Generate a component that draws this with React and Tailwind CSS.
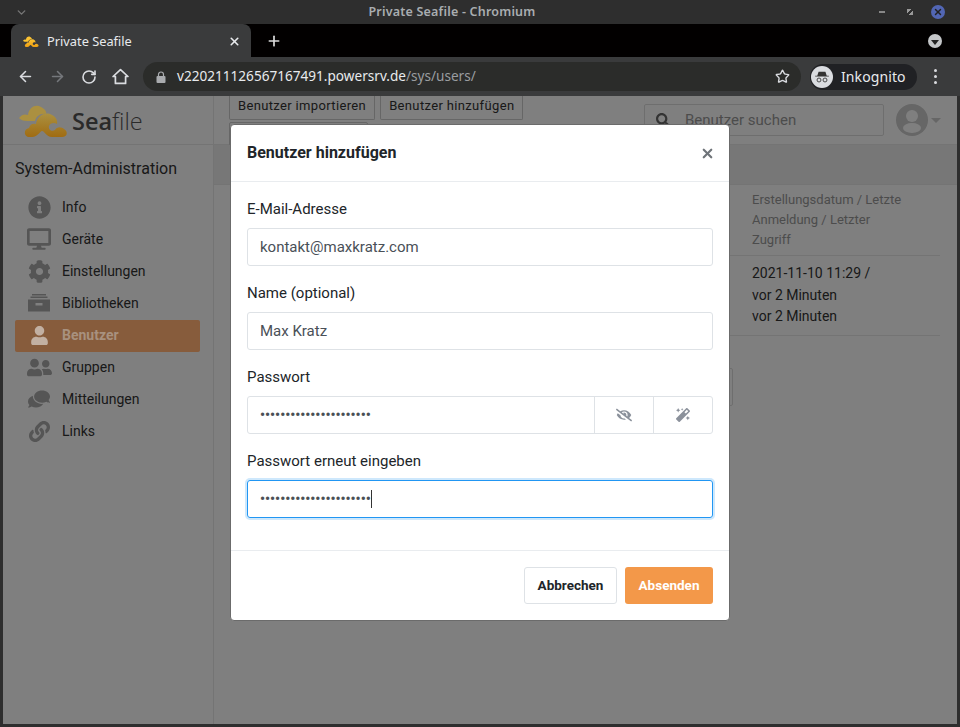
import React from 'react';
import { ArrowLeft, ArrowRight, RotateCw, Star, X, Plus, ChevronDown } from 'lucide-react';
import { FaInfoCircle, FaDesktop, FaCog, FaUser, FaUserFriends, FaComments, FaLink, FaSearch, FaEyeSlash, FaMagic } from 'react-icons/fa';

const LogoMark = ({ className, id, top, bottom }) => (
  <svg viewBox="0 0 49 33" preserveAspectRatio="none" className={className}>
    <defs>
      <linearGradient id={id} x1="0" y1="0" x2="0" y2="1">
        <stop offset="0" stopColor={top} />
        <stop offset="1" stopColor={bottom} />
      </linearGradient>
    </defs>
    <path
      d="M0 14 C3 10 6 10 9 11 C10 3 17 0 22 3 C26 5 28 8 27 10 C22 9 17 12 16 17 L8 17 C4 17 2 16 0 14Z"
      fill={top}
    />
    <path
      d="M10 33 C5 33 4 25 10 24 C11 20 14 19 17 20 C18 13 24 8 31 10 C37 12 39 17 38 20 C35 18 31 19 30 22 C29 26 33 28 36 26 C38 22 43 23 45 25 C49 27 49 33 43 33 L33 33 C27 33 26 27 23 27 C21 27 19 33 13 33Z"
      fill={`url(#${id})`}
    />
  </svg>
);

const ArchiveIcon = () => (
  <svg viewBox="0 0 22 18" className="h-[18px] w-[22px] fill-[#aaaaaa]">
    <rect x="4" y="0" width="14" height="1.5" />
    <rect x="2.5" y="2.5" width="17" height="1.5" />
    <path d="M0 5.5h22v12H0z M7.5 9v2.5h7V9z" fillRule="evenodd" />
  </svg>
);

const navItems = [
  { label: 'Info', icon: <FaInfoCircle size={23} /> },
  { label: 'Geräte', icon: <FaDesktop size={24} /> },
  { label: 'Einstellungen', icon: <FaCog size={23} /> },
  { label: 'Bibliotheken', icon: <ArchiveIcon /> },
  { label: 'Benutzer', icon: <FaUser size={19} />, active: true },
  { label: 'Gruppen', icon: <FaUserFriends size={25} /> },
  { label: 'Mitteilungen', icon: <FaComments size={22} className="-scale-x-100" /> },
  { label: 'Links', icon: <FaLink size={21} /> },
];

const Field = ({ label, children }) => (
  <div className="mb-4">
    <label className="mb-2 block h-[22px] text-[15px] leading-[22px] text-[#212529]">{label}</label>
    {children}
  </div>
);

const inputClass = 'flex h-[38px] items-center rounded-[3px] border border-[#dee2e6] px-3 text-[15px] text-[#495057]';

const Dots = () => (
  <span className="text-[14px] font-bold text-[#4a4f55]">{'•'.repeat(22)}</span>
);

const Modal = () => (
  <div className="absolute left-[230px] top-[124px] z-20 w-[500px] rounded-[4px] border border-[#6b6b6b] bg-white font-['Roboto',sans-serif]">
    <div className="flex h-[57px] items-center justify-between border-b border-[#e9ecef] pl-4 pr-[14px]">
      <h5 className="text-base font-bold text-[#212529]">Benutzer hinzufügen</h5>
      <X size={15} strokeWidth={3.5} className="text-[#6f7479]" />
    </div>
    <div className="p-4">
      <Field label="E-Mail-Adresse">
        <div className={inputClass}>kontakt@maxkratz.com</div>
      </Field>
      <Field label="Name (optional)">
        <div className={inputClass}>Max Kratz</div>
      </Field>
      <Field label="Passwort">
        <div className="flex h-[38px] rounded-[3px] border border-[#dee2e6]">
          <div className="flex flex-1 items-center px-3"><Dots /></div>
          <div className="flex w-[59px] items-center justify-center border-l border-[#dee2e6] text-[#8b919b]">
            <FaEyeSlash size={16} />
          </div>
          <div className="flex w-[59px] items-center justify-center border-l border-[#dee2e6] text-[#8b919b]">
            <FaMagic size={14} />
          </div>
        </div>
      </Field>
      <Field label="Passwort erneut eingeben">
        <div className="flex h-[38px] items-center rounded-[3px] border border-[#2196f3] px-3 shadow-[0_0_0_2px_rgba(33,150,243,0.22)]">
          <Dots />
          <span className="h-[18px] w-px bg-[#333]" />
        </div>
      </Field>
    </div>
    <div className="flex justify-end gap-2 border-t border-[#e9ecef] p-4">
      <button className="h-[37px] w-[93px] rounded-[3px] border border-[#dee2e6] bg-white text-[13.5px] font-bold text-[#212529]">Abbrechen</button>
      <button className="h-[37px] w-[88px] rounded-[3px] bg-[#f39849] text-[13.5px] font-bold text-white">Absenden</button>
    </div>
  </div>
);

const Page = () => (
  <div className="relative flex min-h-0 flex-1 overflow-hidden bg-white font-['Roboto',sans-serif]">
    <aside className="flex w-[211px] shrink-0 flex-col border-r border-[#e8e8e8]">
      <div className="flex h-[49px] shrink-0 items-center border-b border-[#e8e8e8] pl-[16px]">
        <LogoMark className="relative z-10 h-[33px] w-[49px]" id="seafile-page" top="#ab9040" bottom="#a06c12" />
        <span className="ml-[4px] mt-[3px] font-['Open_Sans',sans-serif] text-[23.5px] leading-none text-[#555]">
          <span className="font-semibold">Sea</span><span className="font-light">file</span>
        </span>
      </div>
      <h3 className="mt-[12px] pl-3 text-base leading-[24px] text-[#333]">System-Administration</h3>
      <ul className="ml-3 mt-[11px] flex w-[185px] flex-col">
        {navItems.map((item) => (
          <li
            key={item.label}
            className={`flex h-[32px] items-center rounded-[2px] pb-[2px] text-sm ${item.active ? 'relative z-10 bg-[#875c3c] font-bold text-[#a8917f]' : 'text-[#333]'}`}
          >
            <span className={`flex w-[47px] justify-center pl-px ${item.active ? 'text-[#c2b0a2]' : 'text-[#aaaaaa]'}`}>{item.icon}</span>
            {item.label}
          </li>
        ))}
      </ul>
    </aside>
    <main className="flex min-w-0 flex-1 flex-col">
      <div className="flex h-[49px] shrink-0 justify-between border-b border-[#e8e8e8]">
        <div className="flex w-[320px] flex-wrap content-start gap-x-[5px] gap-y-[2px] pl-[15px]">
          <button className="h-[24px] rounded-b-[2px] border border-t-0 border-[#ccc] px-2 pb-[5px] text-[13px] tracking-[0.35px] text-[#333]">Benutzer importieren</button>
          <button className="h-[24px] rounded-b-[2px] border border-t-0 border-[#ccc] px-2 pb-[5px] text-[13px] tracking-[0.35px] text-[#333]">Benutzer hinzufügen</button>
          <button className="h-[24px] w-[139px] rounded-[2px] border border-[#ccc]" />
        </div>
        <div className="flex items-center pr-[16px]">
          <div className="flex h-[32px] w-[240px] items-center rounded-[2px] border border-[#ddd] pl-[11px] text-[15px] text-[#999]">
            <FaSearch size={14} className="mr-[15px] text-[#666]" />
            Benutzer suchen
          </div>
          <svg viewBox="0 0 32 32" className="ml-[12px] h-[32px] w-[32px]">
            <circle cx="16" cy="16" r="16" fill="#ccc" />
            <circle cx="16" cy="12" r="6" fill="#fff" />
            <ellipse cx="16" cy="24" rx="9" ry="5" fill="#fff" />
          </svg>
          <span className="ml-[3px] h-0 w-0 border-x-[5px] border-t-[5px] border-x-transparent border-t-[#ccc]" />
        </div>
      </div>
      <div className="h-[40px] shrink-0 border-b border-[#e8e8e8] bg-[#eeeeee]" />
      <div className="ml-auto mr-[17px] w-[211px] text-[13px]">
        <div className="h-[71px] border-b border-[#e8e8e8] pl-[23px] pr-[33px] pt-[5px] leading-[20px] text-[#999]">
          Erstellungsdatum / Letzte Anmeldung / Letzter Zugriff
        </div>
        <div className="h-[80px] border-b border-[#e8e8e8] pl-[23px] pt-[7px] text-sm leading-[21.5px] text-[#333]">
          2021-11-10 11:29 /<br />vor 2 Minuten<br />vor 2 Minuten
        </div>
      </div>
      <div className="ml-[400px] mt-[32px] h-[38px] w-[119px] rounded-[2px] border border-[#ddd]" />
    </main>
    <div className="absolute inset-0 bg-black/50" />
  </div>
);

const BrowserChrome = () => (
  <div className="shrink-0 font-['Noto_Sans',sans-serif]">
    <div className="relative flex h-[24px] items-center justify-center bg-[#2e2e2e] pr-[56px] text-[12.5px] font-semibold tracking-[0.2px] text-[#a9adb0]">
      <ChevronDown size={13} strokeWidth={2.5} className="absolute left-[15px] text-[#777]" />
      Private Seafile - Chromium
      <div className="absolute right-[15px] flex items-center">
        <span className="h-[2px] w-[6px] bg-[#888]" />
        <span className="ml-[22px] h-[6px] w-[6px] bg-[linear-gradient(135deg,#999_40%,transparent_40%,transparent_60%,#999_60%)]" />
        <span className="ml-[18px] flex h-[14px] w-[14px] items-center justify-center rounded-full bg-[#5266b4]">
          <X size={10} strokeWidth={3.5} className="text-[#222]" />
        </span>
      </div>
    </div>
    <div className="flex h-[33px] items-end bg-[#020000] pl-[11px] pr-[18px]">
      <div className="flex h-[33px] w-[240px] items-center rounded-t-[8px] bg-[#3a3b3c] pl-[12px] pr-[10px] pt-[2px]">
        <LogoMark className="h-[11px] w-[16px]" id="seafile-tab" top="#fcc332" bottom="#ee9f12" />
        <span className="ml-[8px] flex-1 text-[12.8px] text-[#e8eaed]">Private Seafile</span>
        <X size={13} strokeWidth={3} className="text-[#e8eaed]" />
      </div>
      <Plus size={16} strokeWidth={2.5} className="mb-[8px] ml-[15px] text-[#ddd]" />
      <span className="mb-[9px] ml-auto flex h-[14px] w-[14px] items-center justify-center rounded-full bg-[#c4c6c8]">
        <span className="mt-[2px] h-0 w-0 border-x-[4px] border-t-[5px] border-x-transparent border-t-[#222]" />
      </span>
    </div>
    <div className="flex h-[39px] items-center bg-[#3a3b3c] pl-[17px] pr-[17px]">
      <ArrowLeft size={17} strokeWidth={2.2} className="text-[#dadce0]" />
      <ArrowRight size={17} strokeWidth={2.2} className="ml-[15px] text-[#75787c]" />
      <RotateCw size={16} strokeWidth={2.4} className="ml-[15px] text-[#dadce0]" />
      <svg viewBox="0 0 16 16" className="ml-[15px] h-[17px] w-[17px]">
        <path d="M8 1.5 L15 8 H12.8 V14.5 H3.2 V8 H1 Z" fill="none" stroke="#dadce0" strokeWidth="1.6" strokeLinejoin="round" />
      </svg>
      <div className="ml-[14px] flex h-[29px] w-[658px] items-center rounded-full bg-[#2b2c2a] pl-[13px] pr-[10px] text-[13.6px]">
        <svg viewBox="0 0 10 12" className="h-[12px] w-[10px]">
          <path d="M2.5 5V3.5a2.5 2.5 0 0 1 5 0V5" fill="none" stroke="#a9abae" strokeWidth="1.2" />
          <rect x="0.5" y="5" width="9" height="7" rx="1" fill="#a9abae" />
        </svg>
        <span className="ml-[11px] text-[#e8eaed]">v220211126567167491.powersrv.de</span>
        <span className="text-[#9a9da0]">/sys/users/</span>
        <Star size={15} strokeWidth={2.2} className="ml-auto mr-px text-[#dadce0]" />
      </div>
      <div className="ml-[9px] flex h-[26px] w-[107px] items-center rounded-full bg-[#202124] pl-[1px] text-sm tracking-[0.1px] text-[#e8eaed]">
        <span className="flex h-[22px] w-[22px] items-center justify-center rounded-full bg-[#dadce0]">
          <svg viewBox="0 0 18 14" className="h-[12px] w-[16px]">
            <path d="M5 1h8l1.5 4.5h2.5v1H1v-1h2.5z" fill="#333" />
            <circle cx="5.5" cy="10.5" r="2.3" fill="none" stroke="#333" />
            <circle cx="12.5" cy="10.5" r="2.3" fill="none" stroke="#333" />
          </svg>
        </span>
        <span className="ml-[8px]">Inkognito</span>
      </div>
      <div className="ml-[17px] flex flex-col gap-[3px]">
        <span className="h-[3px] w-[3px] rounded-full bg-[#dadce0]" />
        <span className="h-[3px] w-[3px] rounded-full bg-[#dadce0]" />
        <span className="h-[3px] w-[3px] rounded-full bg-[#dadce0]" />
      </div>
    </div>
  </div>
);

export default function App() {
  return (
    <div className="relative flex h-[727px] w-[960px] flex-col overflow-hidden bg-[#2e2e2e] pb-[3px]">
      <BrowserChrome />
      <div className="flex min-h-0 flex-1 px-[3px]">
        <Page />
      </div>
      <Modal />
    </div>
  );
}
